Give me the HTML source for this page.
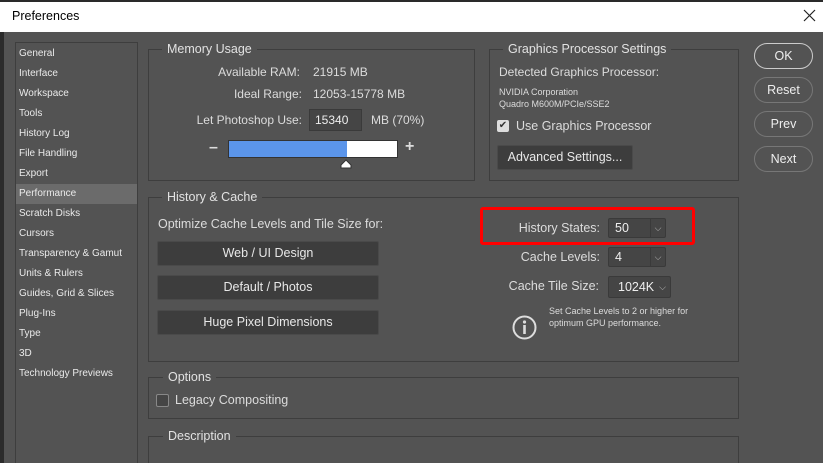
<!DOCTYPE html>
<html><head><style>
*{margin:0;padding:0;box-sizing:border-box}
html,body{width:823px;height:463px;overflow:hidden}
body{background:#535353;font-family:"Liberation Sans",sans-serif;color:#dcdcdc;position:relative;font-size:12px}
.a{position:absolute;white-space:nowrap}
.box{position:absolute;border:1px solid #3e3e3e}
.lg{position:absolute;top:-8px;background:#535353;padding:0 5px;font-size:12.5px;color:#e2e2e2;line-height:15px}
.side div{height:20px;line-height:20px;padding-left:3px;font-size:10px;color:#eaeaea}
.btn{position:absolute;background:#3d3d3d;border:1px solid #4a4a4a;border-radius:2px;text-align:center;color:#e8e8e8;font-size:12.5px}
.rb{position:absolute;left:754px;width:59px;height:26px;border:1px solid #777;border-radius:13px;text-align:center;line-height:24px;font-size:12.5px;color:#eee}
.dd{position:absolute;background:#454545;border:1px solid #3a3a3a;border-radius:2px;font-size:12.5px;color:#eee;padding-left:6px}
.dd i{position:absolute;right:0;top:0;bottom:0;width:15px;border-left:1px solid #3a3a3a;font-style:normal;font-size:9px;text-align:center;color:#bbb}
.r{text-align:right}
</style></head><body>
<div class="a" style="left:0;top:0;width:823px;height:2px;background:#2a2a2a"></div>
<div class="a" style="left:0;top:2px;width:823px;height:30px;background:#fff"></div>
<div class="a" style="left:12px;top:9px;color:#000;font-size:12.5px">Preferences</div>
<svg class="a" style="left:803px;top:9px" width="13" height="13"><path d="M1 1L12 12M12 1L1 12" stroke="#222" stroke-width="1.2"/></svg>
<div class="a" style="left:0;top:32px;width:4px;height:431px;background:#2b2b2b"></div>

<div class="a side" style="left:15px;top:42px;width:123px;height:430px;border:1px solid #3e3e3e;border-bottom:none;padding-top:1px">
<div>General</div><div>Interface</div><div>Workspace</div><div>Tools</div><div>History Log</div><div>File Handling</div><div>Export</div><div style="background:#6b6b6b">Performance</div><div>Scratch Disks</div><div>Cursors</div><div>Transparency &amp; Gamut</div><div>Units &amp; Rulers</div><div>Guides, Grid &amp; Slices</div><div>Plug-Ins</div><div>Type</div><div>3D</div><div>Technology Previews</div>
</div>

<div class="box" style="left:148px;top:49px;width:327px;height:132px"><span class="lg" style="left:13px">Memory Usage</span></div>
<div class="a r" style="left:150px;width:150px;top:65px">Available RAM:</div>
<div class="a" style="left:313px;top:65px">21915 MB</div>
<div class="a r" style="left:150px;width:152px;top:87px">Ideal Range:</div>
<div class="a" style="left:313px;top:87px">12053-15778 MB</div>
<div class="a r" style="left:150px;width:152px;top:113px">Let Photoshop Use:</div>
<div class="a" style="left:309px;top:109px;width:53px;height:22px;background:#454545;border:1px solid #3a3a3a;padding:3px 0 0 5px;color:#eee">15340</div>
<div class="a" style="left:371px;top:113px">MB (70%)</div>
<div class="a" style="left:209px;top:139px;font-size:16px;font-weight:bold">–</div>
<div class="a" style="left:228px;top:140px;width:170px;height:18px;background:#fff;border:1px solid #333"><div style="width:118px;height:16px;background:#5b95ea"></div></div>
<div class="a" style="left:405px;top:138px;font-size:16px;font-weight:bold">+</div>
<svg class="a" style="left:340px;top:159px" width="12" height="10"><path d="M1 9 L1 6 L6 1 L11 6 L11 9 Z" fill="#fff" stroke="#333"/></svg>

<div class="box" style="left:489px;top:49px;width:250px;height:132px"><span class="lg" style="left:13px">Graphics Processor Settings</span></div>
<div class="a" style="left:499px;top:65px">Detected Graphics Processor:</div>
<div class="a" style="left:499px;top:87px;font-size:9px">NVIDIA Corporation</div>
<div class="a" style="left:499px;top:99px;font-size:9px">Quadro M600M/PCIe/SSE2</div>
<div class="a" style="left:497px;top:120px;width:12px;height:12px;background:#ddd;border-radius:2px;color:#333;font-size:10px;line-height:12px;text-align:center">✔</div>
<div class="a" style="left:516px;top:119px;font-size:12.5px">Use Graphics Processor</div>
<div class="btn" style="left:497px;top:145px;width:136px;height:25px;line-height:23px">Advanced Settings...</div>

<div class="rb" style="top:43px;border-color:#ccc">OK</div>
<div class="rb" style="top:77px">Reset</div>
<div class="rb" style="top:111px">Prev</div>
<div class="rb" style="top:146px">Next</div>

<div class="box" style="left:148px;top:197px;width:591px;height:165px"><span class="lg" style="left:13px">History &amp; Cache</span></div>
<div class="a" style="left:158px;top:217px;font-size:12.5px">Optimize Cache Levels and Tile Size for:</div>
<div class="btn" style="left:157px;top:241px;width:222px;height:25px;line-height:23px">Web / UI Design</div>
<div class="btn" style="left:157px;top:275px;width:222px;height:25px;line-height:23px">Default / Photos</div>
<div class="btn" style="left:157px;top:310px;width:222px;height:25px;line-height:23px">Huge Pixel Dimensions</div>

<div class="a" style="left:480px;top:207px;width:215px;height:38px;border:3px solid #f00;border-radius:3px"></div>
<div class="a r" style="left:450px;width:150px;top:221px;font-size:12.5px">History States:</div>
<div class="dd" style="left:608px;top:218px;width:58px;height:20px;line-height:18px">50<i>⌵</i></div>
<div class="a r" style="left:450px;width:150px;top:250px;font-size:12.5px">Cache Levels:</div>
<div class="dd" style="left:608px;top:247px;width:58px;height:20px;line-height:18px">4<i>⌵</i></div>
<div class="a r" style="left:450px;width:149px;top:279px;font-size:12.5px">Cache Tile Size:</div>
<div class="dd" style="left:608px;top:276px;width:63px;height:22px;line-height:20px;padding-left:9px">1024K<i style="border:none">⌵</i></div>
<svg class="a" style="left:512px;top:315px" width="25" height="25"><circle cx="12.5" cy="12.5" r="11" fill="none" stroke="#ddd" stroke-width="2"/><circle cx="12.5" cy="7" r="1.6" fill="#ddd"/><rect x="11.2" y="10" width="2.6" height="9" fill="#ddd"/></svg>
<div class="a" style="left:549px;top:305px;font-size:9px;line-height:12px">Set Cache Levels to 2 or higher for<br>optimum GPU performance.</div>

<div class="box" style="left:148px;top:377px;width:591px;height:42px"><span class="lg" style="left:14px">Options</span></div>
<div class="a" style="left:156px;top:394px;width:13px;height:13px;border:1px solid #888;border-radius:2px;background:#454545"></div>
<div class="a" style="left:175px;top:393px;font-size:12.5px">Legacy Compositing</div>
<div class="box" style="left:148px;top:436px;width:591px;height:40px"><span class="lg" style="left:14px">Description</span></div>
</body></html>
